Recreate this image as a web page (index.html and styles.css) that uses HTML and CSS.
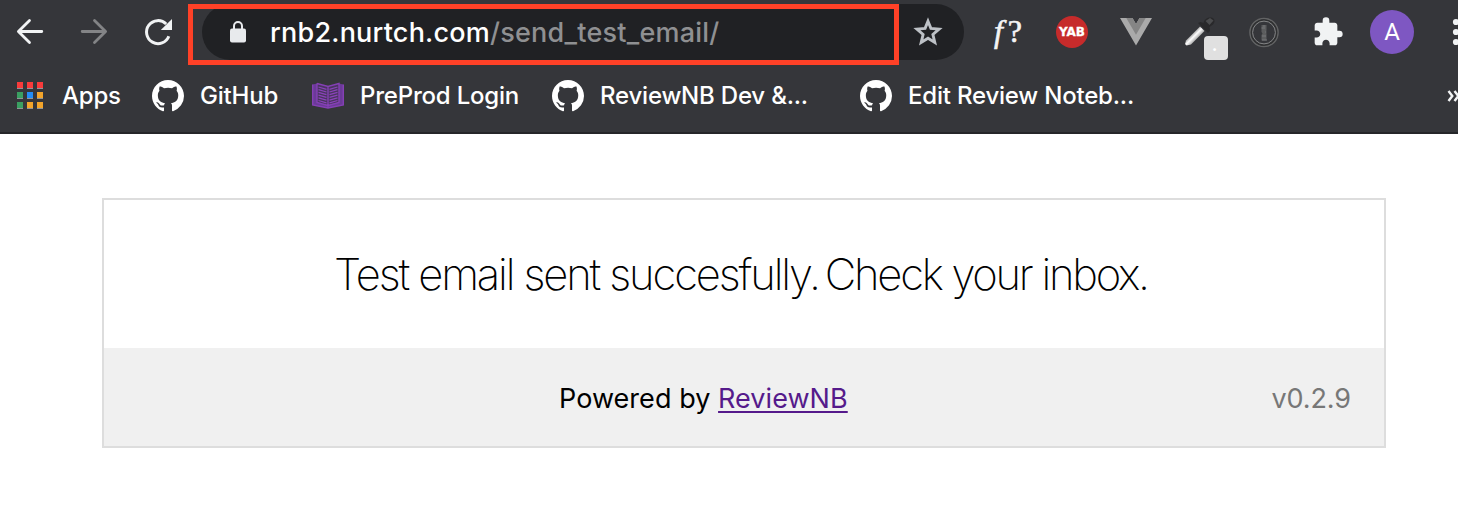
FILE: index.html
```html
<!DOCTYPE html>
<html lang="en">
<head>
<meta charset="utf-8">
<title>ReviewNB</title>
<link rel="stylesheet" href="styles.css">
</head>
<body>
<svg class="defs" width="0" height="0">
  <symbol id="github" viewBox="0 0 16 16"><path fill="#fff" d="M8 0C3.58 0 0 3.58 0 8c0 3.54 2.29 6.53 5.47 7.59.4.07.55-.17.55-.38 0-.19-.01-.82-.01-1.49-2.01.37-2.53-.49-2.69-.94-.09-.23-.48-.94-.82-1.13-.28-.15-.68-.52-.01-.53.63-.01 1.08.58 1.23.82.72 1.21 1.87.87 2.33.66.07-.52.28-.87.51-1.07-1.78-.2-3.64-.89-3.64-3.95 0-.87.31-1.59.82-2.15-.08-.2-.36-1.02.08-2.12 0 0 .67-.21 2.2.82.64-.18 1.32-.27 2-.27s1.36.09 2 .27c1.53-1.04 2.2-.82 2.2-.82.44 1.1.16 1.92.08 2.12.51.56.82 1.27.82 2.15 0 3.07-1.87 3.75-3.65 3.95.29.25.54.73.54 1.48 0 1.07-.01 1.93-.01 2.2 0 .21.15.46.55.38A8.01 8.01 0 0 0 16 8c0-4.42-3.58-8-8-8z"/></symbol>
</svg>
<header class="browser">
  <div class="toolbar">
    <div class="cell"><svg width="32" height="32" viewBox="0 0 32 32" fill="none" stroke="#f1f3f4" stroke-width="2.800" stroke-linecap="round" stroke-linejoin="round"><path d="M27.800 15.500H4.600M15.500 4.500L4.400 15.500l11.100 11"/></svg></div>
    <div class="cell"><svg width="32" height="32" viewBox="0 0 32 32" fill="none" stroke="#838486" stroke-width="2.800" stroke-linecap="round" stroke-linejoin="round"><path d="M4.200 15.500H27.400M16.500 4.500l11.100 11-11.100 11"/></svg></div>
    <div class="cell"><svg width="32" height="32" viewBox="0 0 32 32"><path d="M26.800 20.200A11.500 11.500 0 1 1 24.200 8" fill="none" stroke="#f1f3f4" stroke-width="3"/><path d="M30 3v11H18.800z" fill="#f1f3f4"/></svg></div>
    <div class="omnibox">
      <svg class="lock" width="16" height="22" viewBox="0 0 16 22"><rect y="7.500" width="16" height="14" rx="2" fill="#e8eaed"/><path d="M4 8.500V5a4 4 0 0 1 8 0v3.500" fill="none" stroke="#e8eaed" stroke-width="2"/></svg>
      <span class="url">rnb2.nurtch.com<span class="path">/send_test_email/</span></span>
      <svg class="star" width="30" height="30" viewBox="0 0 30 30"><path d="M15 4.200l2.900 7.200 8.200.7-6.200 5.400 1.900 8-6.800-4.200-6.800 4.200 1.900-8-6.200-5.400 8.200-.7z" fill="none" stroke="#bdc1c6" stroke-width="2.900"/></svg>
      <div class="highlight"></div>
    </div>
    <div class="cell fn"><i>f</i>?</div>
    <div class="cell"><span class="yab">YAB</span></div>
    <div class="cell"><svg width="32" height="32" viewBox="0 0 32 32"><path d="M0 2h12.500L16 8l3.500-6H32L16 29.500z" fill="#aaa"/><path d="M6.300 2H12.500L16 8l3.500-6h6.200L16 18.800z" fill="#858585"/></svg></div>
    <div class="cell"><svg width="32" height="32" viewBox="0 0 32 32"><defs><linearGradient id="metal" gradientUnits="userSpaceOnUse" x1="8" y1="16" x2="15" y2="23"><stop offset="0" stop-color="#777"/><stop offset=".45" stop-color="#fff"/><stop offset="1" stop-color="#888"/></linearGradient></defs><path d="M16 10.500l4.500 4.500L7 28.500l-4.500 1-1.500-1.500 1-3.500z" fill="url(#metal)"/><path d="M14 7l2.500-1 3 1C20 4 23 1 27 1.500c4 .5 4.500 4.500 2 7L25.500 11l.5 4-2 2z" fill="#29292b"/><path d="M21.500 5l4.500-3 3.500 2.500-4 4.500z" fill="#4b4c4e"/></svg><span class="chip">.</span></div>
    <div class="cell"><svg width="32" height="32" viewBox="0 0 32 32" fill="none"><circle cx="16" cy="16.500" r="14" stroke="#626364" stroke-width="1.600"/><circle cx="16" cy="16.500" r="12.700" stroke="#2f3031" stroke-width="1.200"/><circle cx="16" cy="16.500" r="11.400" stroke="#858687" stroke-width="1"/><path d="M13.500 9h5v5.500l-1 1.500 1 1.500v7h-5v-5.500l1-1.500-1-1.500z" fill="#5c5d5e"/><path d="M13.500 12h1.500M16 9v4M17 16h1.500M14 20h4M14 24h5" stroke="#77787a"/></svg></div>
    <div class="cell"><svg width="32" height="32" viewBox="0 0 24 24"><path fill="#f1f3f4" d="M20.500 11H19V7c0-1.100-.9-2-2-2h-4V3.500a2.500 2.500 0 0 0-5 0V5H4c-1.100 0-1.990.9-1.990 2v3.800H3.500c1.490 0 2.700 1.210 2.700 2.700s-1.210 2.700-2.700 2.700H2V20c0 1.100.9 2 2 2h3.800v-1.500c0-1.490 1.210-2.700 2.700-2.700s2.700 1.210 2.700 2.700V22H17c1.100 0 2-.9 2-2v-4h1.500a2.500 2.500 0 0 0 0-5z"/></svg></div>
    <div class="cell"><span class="avatar">A</span></div>
    <div class="cell"><svg width="8" height="32" viewBox="0 0 8 32" fill="#f1f3f4"><circle cx="4" cy="6" r="3.100"/><circle cx="4" cy="16" r="3.100"/><circle cx="4" cy="26" r="3.100"/></svg></div>
  </div>
  <nav class="bookmarks">
    <div class="bookmark apps"><svg width="28" height="28" viewBox="0 0 28 28"><path fill="#929497" d="M1 0h6v7H1zM11 0h6v7h-6zM21 0h6v7h-6zM1 10h6v7H1zM11 10h6v7h-6zM21 10h6v7h-6zM1 20h6v7H1zM11 20h6v7h-6zM21 20h6v7h-6z"/><path fill="#f83b3b" d="M1 0h6v6H1zM11 0h6v6h-6zM21 0h6v6h-6z"/><path fill="#3a9f61" d="M1 10h6v6H1zM1 20h6v6H1z"/><path fill="#238cf5" d="M11 10h6v6h-6z"/><path fill="#f2a42b" d="M21 10h6v6h-6zM11 20h6v6h-6zM21 20h6v6h-6z"/></svg><span class="label">Apps</span></div>
    <div class="bookmark"><svg width="32" height="32"><use href="#github"/></svg><span class="label">GitHub</span></div>
    <div class="bookmark"><svg width="32" height="32" viewBox="0 0 32 32"><path d="M.7 4.500L5 3.500l11 3.300 11-3.300 4.300 1v20.500l-15.300 3-15.300-3z" fill="#6b3a98"/><path d="M5 3.500v19l11 3 11-3v-19L16 6.500z" fill="#49355f"/><path d="M.7 4.500v20.500l15.300 3 15.300-3V4.500M5 3.500v19l11 3 11-3v-19L16 6.500 5 3.500M16 6.500v21" fill="none" stroke="#8540b5" stroke-width="1.400"/><path d="M6.500 7l8 2.300M6.500 9.700l8 2.300M6.500 12.400l8 2.300M6.500 15.100l8 2.300M6.500 17.800l8 2.300M6.500 20.500l8 2.300M25.500 7l-8 2.300M25.500 9.700l-8 2.300M25.500 12.400l-8 2.300M25.500 15.100l-8 2.300M25.500 17.800l-8 2.300M25.500 20.500l-8 2.300" stroke="#8b43bb" stroke-width="1.200"/></svg><span class="label">PreProd Login</span></div>
    <div class="bookmark"><svg width="32" height="32"><use href="#github"/></svg><span class="label">ReviewNB Dev &amp;...</span></div>
    <div class="bookmark"><svg width="32" height="32"><use href="#github"/></svg><span class="label">Edit Review Noteb...</span></div>
    <svg class="more" width="14" height="14" viewBox="0 0 14 14" fill="none" stroke="#f1f3f4" stroke-width="2.400"><path d="M1.500 2l3.800 5-3.800 5M7.500 2l3.800 5-3.800 5"/></svg>
  </nav>
</header>
<main class="card">
  <h1 class="message"><span class="sentence">Test email sent succesfully.</span> Check your inbox.</h1>
  <footer class="footer">
    <span class="powered">Powered by <a class="link" href="#">ReviewNB</a></span>
    <span class="version">v0.2.9</span>
  </footer>
</main>
</body>
</html>
```

FILE: styles.css
```css
* { box-sizing: border-box; }
body { margin: 0; background: #fff; font-family: Inter, "Liberation Sans", sans-serif; overflow: hidden; }
svg { display: block; flex: none; }
.defs { position: absolute; }
.browser { height: 134px; background: #35363a; border-bottom: 2px solid #252629; overflow: hidden; }
.toolbar { display: flex; align-items: center; height: 64px; margin-left: -2px; }
.cell { position: relative; flex: none; width: 64px; height: 64px; display: flex; align-items: center; justify-content: center; }
.omnibox { position: relative; flex: none; display: flex; align-items: center; width: 762px; height: 56px; margin: 0 12px; padding: 0 21px 0 28px; border-radius: 28px; background: #202124; }
.lock { margin-right: 24px; }
.url { flex: 1; padding-top: 2px; font-size: 27px; font-weight: 450; letter-spacing: 0.22px; line-height: 54px; color: #fff; white-space: nowrap; }
.path { color: #8f9092; }
.highlight { position: absolute; left: -14px; top: 0; width: 711px; height: 61px; border: 5px solid #ff4127; }
.fn { font-family: "Liberation Serif", serif; font-size: 32px; color: #f4f4f4; gap: 5px; padding-bottom: 2px; -webkit-text-stroke: 0.6px #f4f4f4; }
.yab { width: 32px; height: 32px; border-radius: 50%; background: #c62b2b; color: #fff; font: bold 12px/33px "DejaVu Sans", sans-serif; text-align: center; -webkit-text-stroke: 0.3px #fff; }
.chip { position: absolute; left: 36px; top: 36px; width: 24px; height: 24px; border-radius: 4px; background: #e0e0e0; color: #fff; font-weight: 700; font-size: 17px; line-height: 19px; text-align: center; padding-right: 3px; }
.avatar { width: 44px; height: 44px; border-radius: 50%; background: #7e57c2; color: #fff; font: 24px/45px Roboto, sans-serif; text-align: center; }
.bookmarks { display: grid; grid-template-columns: 136px 160px 240px 308px 587px 14px; align-items: center; height: 64px; padding-left: 16px; }
.bookmark { display: flex; align-items: center; gap: 16px; color: #fff; font-size: 24px; font-weight: 450; letter-spacing: -0.2px; white-space: nowrap; }
.label { padding-bottom: 1px; }
.apps { gap: 18px; }
.card { width: 1284px; height: 250px; margin: 64px 0 0 102px; border: 2px solid #ddd; }
.message { margin: 0; height: 148px; padding-right: 6px; line-height: 149px; text-align: center; font-size: 43.5px; font-weight: 250; letter-spacing: -2.25px; color: #000; white-space: nowrap; }
.sentence { letter-spacing: -2.13px; margin-right: -4px; }
.footer { display: flex; align-items: center; justify-content: space-between; height: 98px; padding: 2px 33px 0 455px; background: #f0f0f0; font-size: 27px; letter-spacing: 0.05px; color: #000; }
.link { color: #551a8b; text-decoration-thickness: 2px; text-underline-offset: 3px; text-decoration-skip-ink: none; }
.version { color: #777; letter-spacing: -0.1px; }
```
